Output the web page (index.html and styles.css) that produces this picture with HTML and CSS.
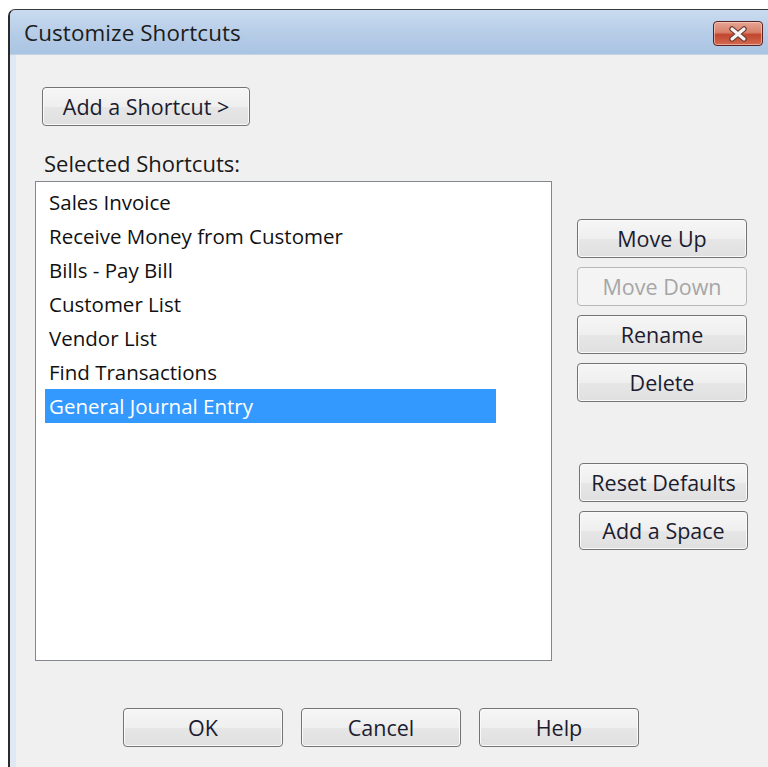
FILE: index.html
```html
<!DOCTYPE html>
<html lang="en">
<head>
<meta charset="utf-8">
<title>Customize Shortcuts</title>
<link rel="stylesheet" href="styles.css">
</head>
<body>
<div class="window">
  <div class="titlebar">
    <span class="title">Customize Shortcuts</span>
    <button class="close" aria-label="Close">
      <svg width="22" height="16" viewBox="0 0 22 16">
        <path d="M5 3 L17 13 M17 3 L5 13" stroke="#6b3a30" stroke-width="5.5" stroke-linecap="round"/>
        <path d="M5 3 L17 13 M17 3 L5 13" stroke="#f4f4f4" stroke-width="3.2" stroke-linecap="round"/>
      </svg>
    </button>
  </div>
  <div class="client">
    <button class="btn add-btn">Add a Shortcut &gt;</button>
    <div class="label">Selected Shortcuts:</div>
    <div class="main">
      <ul class="list">
        <li>Sales Invoice</li>
        <li>Receive Money from Customer</li>
        <li>Bills - Pay Bill</li>
        <li>Customer List</li>
        <li>Vendor List</li>
        <li>Find Transactions</li>
        <li class="selected">General Journal Entry</li>
      </ul>
      <div class="side">
        <div class="group">
          <button class="btn side-btn">Move Up</button>
          <button class="btn side-btn" disabled>Move Down</button>
          <button class="btn side-btn">Rename</button>
          <button class="btn side-btn">Delete</button>
        </div>
        <div class="group group-lower">
          <button class="btn side-btn">Reset Defaults</button>
          <button class="btn side-btn">Add a Space</button>
        </div>
      </div>
    </div>
    <div class="footer">
      <button class="btn foot-btn">OK</button>
      <button class="btn foot-btn">Cancel</button>
      <button class="btn foot-btn">Help</button>
    </div>
  </div>
</div>
</body>
</html>
```

FILE: styles.css
```css
html, body {
  margin: 0;
  padding: 0;
  background: #ffffff;
  overflow: hidden;
  height: 767px;
}

body {
  font-family: "Open Sans", "Noto Sans", sans-serif;
  color: #1a1a1a;
}

.window {
  margin: 9px 0 0 8px;
  width: 790px;
  height: 780px;
  border-left: 2px solid #2b2b2b;
  border-top: 1px solid #3a3a3a;
  border-top-left-radius: 7px;
  background: #dfe8f3;
  overflow: hidden;
}

.titlebar {
  height: 44px;
  display: flex;
  align-items: center;
  padding-left: 14px;
  background: linear-gradient(#c9dbef, #b4cbe6 60%, #aac4e3);
  border-bottom: 1px solid #c4d3e4;
  position: relative;
}

.title {
  font-size: 22.4px;
  color: #1c1c1c;
  letter-spacing: 0.1px;
}

.close {
  position: absolute;
  left: 703px;
  top: 11px;
  width: 50px;
  height: 25px;
  padding: 0;
  border: 1px solid #5a2323;
  border-radius: 4px;
  background: linear-gradient(#e5a592, #d9806a 45%, #c2462e 55%, #d26a50);
  display: flex;
  align-items: center;
  justify-content: center;
  box-shadow: inset 0 0 0 1px rgba(255, 220, 210, 0.55);
}

.client {
  background: #f0f0f0;
  margin-left: 6px;
  height: 720px;
  padding: 32px 0 0 19px;
  box-sizing: border-box;
}

.btn {
  font-family: inherit;
  font-size: 21.5px;
  color: #1c1c30;
  height: 39px;
  padding: 0;
  border: 1px solid #747474;
  border-radius: 4px;
  background: linear-gradient(#f6f6f6, #efefef 50%, #e6e6e6 52%, #e0e0e0);
  box-shadow: inset 0 0 0 1px #fafafa;
}

.btn:disabled {
  color: #a6a6a6;
  border-color: #b8b8b8;
  background: #f4f4f4;
  box-shadow: none;
}

.add-btn {
  display: block;
  width: 208px;
  margin-left: 7px;
}

.label {
  font-size: 22px;
  line-height: 24px;
  margin: 25px 0 0 9px;
  height: 24px;
}

.main {
  display: flex;
  margin-top: 6px;
}

.list {
  list-style: none;
  margin: 0;
  padding: 3px 0 0 9px;
  width: 517px;
  height: 480px;
  box-sizing: border-box;
  background: #ffffff;
  border: 1px solid #828790;
}

.list li {
  width: 451px;
  height: 34px;
  line-height: 34px;
  padding-left: 4px;
  box-sizing: border-box;
  font-size: 20.5px;
  color: #111111;
}

.list li.selected {
  background: #3399ff;
  color: #ffffff;
}

.side {
  display: flex;
  flex-direction: column;
  margin-left: 25px;
  padding-top: 38px;
}

.group {
  display: flex;
  flex-direction: column;
  gap: 9px;
}

.group-lower {
  margin-top: 61px;
  padding-left: 2px;
}

.side-btn {
  width: 170px;
}

.group-lower .side-btn {
  width: 169px;
}

.footer {
  display: flex;
  gap: 18px;
  margin: 47px 0 0 88px;
}

.foot-btn {
  width: 160px;
}
```
